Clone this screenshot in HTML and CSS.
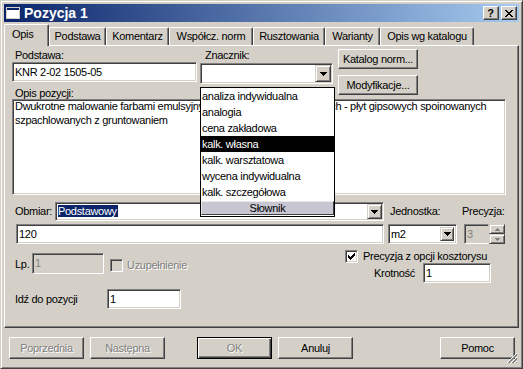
FILE: index.html
```html
<!DOCTYPE html>
<html lang="pl">
<head>
<meta charset="utf-8">
<title>Pozycja 1</title>
<link rel="stylesheet" href="styles.css">
</head>
<body>
<div class="window">
  <div class="titlebar">
    <svg class="ticon" width="14" height="12" viewBox="0 0 14 12" shape-rendering="crispEdges">
      <rect x="0" y="0" width="14" height="12" fill="#d4d0c8"/>
      <rect x="1" y="1" width="12" height="10" fill="#ffffff"/>
      <rect x="1" y="1" width="12" height="2" fill="#0a246a"/>
    </svg>
    <span class="title">Pozycja 1</span>
    <div class="capbtns">
      <span class="capbtn capbtn-help">?</span>
      <span class="capbtn capbtn-close">
        <svg width="8" height="7" viewBox="0 0 8 7" shape-rendering="crispEdges">
          <path d="M0 0h2v1H0zM6 0h2v1H6zM1 1h2v1H1zM5 1h2v1H5zM2 2h4v1H2zM3 3h2v1H3zM2 4h4v1H2zM1 5h2v1H1zM5 5h2v1H5zM0 6h2v1H0zM6 6h2v1H6z" fill="#000"/>
        </svg>
      </span>
    </div>
  </div>

  <div class="tabs">
    <div class="tab tab-sel tab-opis">Opis</div>
    <div class="tab tab-podstawa">Podstawa</div>
    <div class="tab tab-komentarz">Komentarz</div>
    <div class="tab tab-wspol">Współcz. norm</div>
    <div class="tab tab-rusz">Rusztowania</div>
    <div class="tab tab-war">Warianty</div>
    <div class="tab tab-kat">Opis wg katalogu</div>
  </div>

  <div class="panel">
    <div class="top">
      <div class="col1">
        <div class="lbl lbl-podstawa">Podstawa:</div>
        <div class="field field-podstawa"><span class="ftext">KNR 2-02 1505-05</span></div>
        <div class="lbl lbl-opis">Opis pozycji:</div>
      </div>
      <div class="col2">
        <div class="lbl lbl-znacznik">Znacznik:</div>
        <div class="field combo combo-znacznik">
          <span class="ftext"></span>
          <span class="arrowbtn">
            <svg width="7" height="4" viewBox="0 0 7 4" shape-rendering="crispEdges"><path d="M0 0h7v1H0zM1 1h5v1H1zM2 2h3v1H2zM3 3h1v1H3z" fill="#000"/></svg>
          </span>
        </div>
        <div class="droplist">
          <div class="item">analiza indywidualna</div>
          <div class="item">analogia</div>
          <div class="item">cena zakładowa</div>
          <div class="item item-sel">kalk. własna</div>
          <div class="item">kalk. warsztatowa</div>
          <div class="item">wycena indywidualna</div>
          <div class="item">kalk. szczegółowa</div>
          <div class="slownik">Słownik</div>
        </div>
      </div>
      <div class="col3">
        <div class="btn btn-katalog">Katalog norm...</div>
        <div class="btn btn-modyf">Modyfikacje...</div>
      </div>
    </div>

    <div class="field textarea">
      <div class="tatext">Dwukrotne malowanie farbami emulsyjnymi powierzchni wewnętrznych - płyt gipsowych spoinowanych<br>szpachlowanych z gruntowaniem</div>
    </div>

    <div class="row row-obmiar">
      <div class="lbl lbl-obmiar">Obmiar:</div>
      <div class="field combo combo-obmiar">
        <span class="ftext"><span class="selected-text">Podstawowy</span></span>
        <span class="arrowbtn arrowbtn-sm">
          <svg width="7" height="4" viewBox="0 0 7 4" shape-rendering="crispEdges"><path d="M0 0h7v1H0zM1 1h5v1H1zM2 2h3v1H2zM3 3h1v1H3z" fill="#000"/></svg>
        </span>
      </div>
      <div class="lbl lbl-jedn">Jednostka:</div>
      <div class="lbl lbl-prec">Precyzja:</div>
    </div>

    <div class="row row-values">
      <div class="field field-120"><span class="ftext">120</span></div>
      <div class="field combo combo-jedn">
        <span class="ftext">m2</span>
        <span class="arrowbtn arrowbtn-jedn">
          <svg width="7" height="4" viewBox="0 0 7 4" shape-rendering="crispEdges"><path d="M0 0h7v1H0zM1 1h5v1H1zM2 2h3v1H2zM3 3h1v1H3z" fill="#000"/></svg>
        </span>
      </div>
      <div class="spin">
        <div class="field field-disabled field-prec"><span class="ftext">3</span></div>
        <div class="spinbtns">
          <span class="spinbtn">
            <svg width="5" height="3" viewBox="0 0 5 3" shape-rendering="crispEdges"><path d="M2 0h1v1H2zM1 1h3v1H1z" fill="#808080"/><path d="M0 2h5v1H0z" fill="#808080"/></svg>
          </span>
          <span class="spinbtn">
            <svg width="5" height="3" viewBox="0 0 5 3" shape-rendering="crispEdges"><path d="M0 0h5v1H0zM1 1h3v1H1zM2 2h1v1H2z" fill="#808080"/></svg>
          </span>
        </div>
      </div>
    </div>

    <div class="lower">
      <div class="lower-left">
        <div class="row row-lp">
          <div class="lbl lbl-lp">Lp.</div>
          <div class="field field-disabled field-lp"><span class="ftext">1</span></div>
          <span class="check check-disabled"></span>
          <span class="lbl lbl-disabled lbl-uzup">Uzupełnienie</span>
        </div>
        <div class="row row-idz">
          <div class="lbl lbl-idz">Idź do pozycji</div>
          <div class="field field-idz"><span class="ftext">1</span></div>
        </div>
      </div>
      <div class="lower-right">
        <div class="row row-check">
          <span class="check">
            <svg width="7" height="7" viewBox="0 0 7 7" shape-rendering="crispEdges"><path d="M0 2h1v3H0zM1 3h1v3H1zM2 4h1v3H2zM3 3h1v3H3zM4 2h1v3H4zM5 1h1v3H5zM6 0h1v3H6z" fill="#000"/></svg>
          </span>
          <span class="lbl lbl-check">Precyzja z opcji kosztorysu</span>
        </div>
        <div class="row row-krot">
          <div class="lbl lbl-krot">Krotność</div>
          <div class="field field-krot"><span class="ftext">1</span></div>
        </div>
      </div>
    </div>
  </div>

  <div class="footer">
    <div class="btn btn-foot btn-disabled">Poprzednia</div>
    <div class="btn btn-foot btn-disabled btn-nast">Następna</div>
    <div class="btn btn-foot btn-default btn-disabled btn-ok">OK</div>
    <div class="btn btn-foot btn-anuluj">Anuluj</div>
    <div class="btn btn-foot btn-pomoc">Pomoc</div>
  </div>

  <svg class="grip" width="12" height="12" viewBox="0 0 12 12" shape-rendering="crispEdges">
    <path d="M11 1L1 11" stroke="#fff" stroke-width="1"/>
    <path d="M11 2L2 11M11 3L3 11" stroke="#808080"/>
    <path d="M11 5L5 11" stroke="#fff"/>
    <path d="M11 6L6 11M11 7L7 11" stroke="#808080"/>
    <path d="M11 9L9 11" stroke="#fff"/>
    <path d="M11 10L10 11" stroke="#808080"/>
  </svg>
</div>
</body>
</html>
```

FILE: styles.css
```css
* { box-sizing: border-box; }

html, body {
  margin: 0;
  padding: 0;
  background: #d4d0c8;
}

body {
  font-family: "Liberation Sans", Arial, sans-serif;
  font-size: 11px;
  letter-spacing: -0.3px;
  color: #000;
}

.window {
  position: relative;
  width: 523px;
  height: 369px;
  border: 1px solid;
  border-color: #d4d0c8 #404040 #404040 #d4d0c8;
  box-shadow: inset 1px 1px #fff, inset -1px -1px #808080;
  padding: 3px;
  background: #d4d0c8;
  display: flex;
  flex-direction: column;
}

/* title bar */
.titlebar {
  height: 18px;
  flex: none;
  background: linear-gradient(to right, #0a246a, #a6caf0);
  display: flex;
  align-items: center;
}

.ticon {
  margin-left: 2px;
  flex: none;
}

.title {
  margin-left: 4px;
  color: #fff;
  font-weight: bold;
  font-size: 14px;
  letter-spacing: 0;
  line-height: 18px;
}

.capbtns {
  margin-left: auto;
  margin-right: 2px;
  display: flex;
  gap: 2px;
}

.capbtn {
  width: 16px;
  height: 14px;
  background: #d4d0c8;
  border: 1px solid;
  border-color: #fff #404040 #404040 #fff;
  box-shadow: inset -1px -1px #808080;
  display: flex;
  align-items: center;
  justify-content: center;
}

.capbtn-help {
  font-weight: bold;
  font-size: 11px;
  letter-spacing: 0;
  line-height: 12px;
  padding-right: 1px;
}

/* tabs */
.tabs {
  margin-top: 1px;
  height: 22px;
  flex: none;
  display: flex;
  align-items: flex-end;
  position: relative;
  z-index: 1;
}

.tab {
  height: 18px;
  background: #d4d0c8;
  border-top: 1px solid #fff;
  border-left: 1px solid #fff;
  border-right: 1px solid #404040;
  box-shadow: inset -1px 0 #808080;
  border-radius: 2px 2px 0 0;
  padding-top: 2px;
  line-height: 13px;
  text-align: center;
  white-space: nowrap;
}

.tab-sel {
  height: 22px;
  margin-bottom: -1px;
  padding-top: 3px;
  padding-left: 7px;
  text-align: left;
}

.tab-opis { width: 45px; }
.tab-podstawa { width: 57px; }
.tab-komentarz { width: 63px; }
.tab-wspol { width: 84px; }
.tab-rusz { width: 72px; }
.tab-war { width: 55px; }
.tab-kat { width: 94px; }

/* panel */
.panel {
  height: 283px;
  flex: none;
  border: 1px solid;
  border-color: #fff #404040 #404040 #fff;
  box-shadow: inset -1px -1px #808080;
  display: flex;
  flex-direction: column;
}

.lbl {
  line-height: 13px;
  white-space: nowrap;
}

.lbl-disabled {
  color: #808080;
  text-shadow: 1px 1px #fff;
}

.field {
  background: #fff;
  border: 1px solid;
  border-color: #808080 #fff #fff #808080;
  box-shadow: inset 1px 1px #404040, inset -1px -1px #d4d0c8;
  display: flex;
  align-items: center;
  padding: 0 1px 0 2px;
  line-height: 13px;
  white-space: nowrap;
  flex: none;
}

.field-disabled {
  background: #d4d0c8;
  color: #808080;
}

.btn {
  background: #d4d0c8;
  border: 1px solid;
  border-color: #fff #404040 #404040 #fff;
  box-shadow: inset -1px -1px #808080;
  display: flex;
  align-items: center;
  justify-content: center;
  line-height: 13px;
  white-space: nowrap;
  flex: none;
}

.btn-disabled {
  color: #808080;
  text-shadow: 1px 1px #fff;
}

/* top area */
.top {
  display: flex;
  align-items: flex-start;
  padding-top: 2px;
}

.col1 {
  margin-left: 7px;
  width: 185px;
  flex: none;
}

.lbl-podstawa {
  margin-top: 1px;
  padding-left: 3px;
}

.field-podstawa {
  height: 20px;
  width: 185px;
}

.lbl-opis {
  margin-top: 5px;
  padding-left: 3px;
  line-height: 12px;
}

.col2 {
  margin-left: 3px;
  width: 134px;
  flex: none;
  position: relative;
}

.lbl-znacznik {
  margin-top: 1px;
  padding-left: 5px;
}

.combo {
  position: relative;
  padding-right: 18px;
}

.combo-znacznik {
  margin-top: 1px;
  height: 21px;
  width: 133px;
}

.arrowbtn {
  position: absolute;
  right: 1px;
  top: 1px;
  bottom: 1px;
  width: 16px;
  background: #d4d0c8;
  border: 1px solid;
  border-color: #d4d0c8 #404040 #404040 #d4d0c8;
  box-shadow: inset 1px 1px #fff, inset -1px -1px #808080;
  display: flex;
  align-items: center;
  justify-content: center;
}

.arrowbtn svg { display: block; }

.droplist {
  position: absolute;
  left: 0;
  top: 39px;
  width: 135px;
  height: 130px;
  background: #fff;
  border: 1px solid #000;
  z-index: 5;
}

.item {
  height: 16px;
  line-height: 16px;
  padding-left: 1px;
  white-space: nowrap;
}

.item-sel {
  background: #000;
  color: #fff;
}

.slownik {
  margin-top: 1px;
  height: 14px;
  background: #c8c6d0;
  border: 1px solid;
  border-color: #e8e8ee #404040 #404040 #e8e8ee;
  text-align: center;
  line-height: 12px;
}

.col3 {
  margin-left: 4px;
  width: 80px;
  flex: none;
  display: flex;
  flex-direction: column;
  gap: 6px;
  margin-top: 1px;
}

.btn-katalog, .btn-modyf {
  height: 20px;
  width: 80px;
}

/* textarea */
.textarea {
  margin-left: 7px;
  width: 494px;
  height: 96px;
  align-items: flex-start;
  padding: 0 1px 0 2px;
}

.tatext {
  margin-top: -1px;
  line-height: 14px;
  white-space: nowrap;
}

/* rows */
.row {
  display: flex;
  align-items: center;
}

.row-obmiar {
  margin-top: 7px;
  height: 19px;
}

.lbl-obmiar {
  margin-left: 10px;
  width: 40px;
}

.combo-obmiar {
  width: 329px;
  height: 19px;
}

.selected-text {
  background: #0a246a;
  color: #fff;
  padding: 0 1px 0 0;
}

.arrowbtn-sm {
  width: 15px;
}

.lbl-jedn {
  margin-left: 6px;
  width: 72px;
}

.lbl-prec {
  width: 50px;
}

.row-values {
  margin-top: 3px;
  height: 20px;
}

.field-120 {
  margin-left: 11px;
  width: 368px;
  height: 20px;
}

.combo-jedn {
  margin-left: 4px;
  width: 69px;
  height: 20px;
}

.arrowbtn-jedn {
  width: 14px;
  top: 2px;
  bottom: 2px;
  right: 2px;
}

.spin {
  margin-left: 7px;
  display: flex;
  height: 20px;
}

.field-prec {
  width: 25px;
  height: 20px;
  border-color: #808080 #d4d0c8 #fff #808080;
}

.spinbtns {
  width: 16px;
  height: 20px;
  display: flex;
  flex-direction: column;
}

.spinbtn {
  flex: 1;
  background: #d4d0c8;
  border: 1px solid;
  border-color: #d4d0c8 #404040 #404040 #d4d0c8;
  box-shadow: inset 1px 1px #fff, inset -1px -1px #808080;
  display: flex;
  align-items: center;
  justify-content: center;
}

.spinbtn svg { display: block; }

/* lower */
.lower {
  display: flex;
  align-items: flex-start;
}

.lower-left {
  width: 340px;
  flex: none;
  padding-left: 10px;
}

.row-lp {
  margin-top: 9px;
  height: 21px;
}

.lbl-lp {
  width: 17px;
  padding-top: 2px;
}

.field-lp {
  width: 72px;
  height: 21px;
}

.check {
  width: 13px;
  height: 13px;
  flex: none;
  background: #fff;
  border: 1px solid;
  border-color: #808080 #fff #fff #808080;
  box-shadow: inset 1px 1px #404040, inset -1px -1px #d4d0c8;
  display: flex;
  align-items: center;
  justify-content: center;
}

.check svg { display: block; }

.check-disabled {
  background: #d4d0c8;
  margin-left: 6px;
  margin-top: 3px;
}

.lbl-uzup {
  margin-left: 4px;
  margin-top: 3px;
}

.row-idz {
  margin-top: 15px;
  height: 20px;
}

.lbl-idz {
  width: 92px;
}

.field-idz {
  width: 74px;
  height: 20px;
}

.lower-right {
  display: flex;
  flex-direction: column;
  margin-top: 6px;
}

.row-check {
  height: 13px;
}

.lbl-check {
  margin-left: 5px;
}

.row-krot {
  height: 20px;
}

.lbl-krot {
  margin-left: 29px;
  width: 49px;
}

.field-krot {
  width: 68px;
  height: 20px;
}

/* footer */
.footer {
  display: flex;
  margin-top: 9px;
  padding-left: 5px;
}

.btn-foot {
  width: 75px;
  height: 22px;
}

.btn-nast { margin-left: 6px; }
.btn-ok { margin-left: 32px; }
.btn-anuluj { margin-left: 6px; }
.btn-pomoc { margin-left: 87px; }

.btn-default {
  border: 1px solid #000;
  box-shadow: inset 1px 1px #fff, inset -1px -1px #404040, inset -2px -2px #808080;
}

.grip {
  position: absolute;
  right: 4px;
  bottom: 4px;
}
```
